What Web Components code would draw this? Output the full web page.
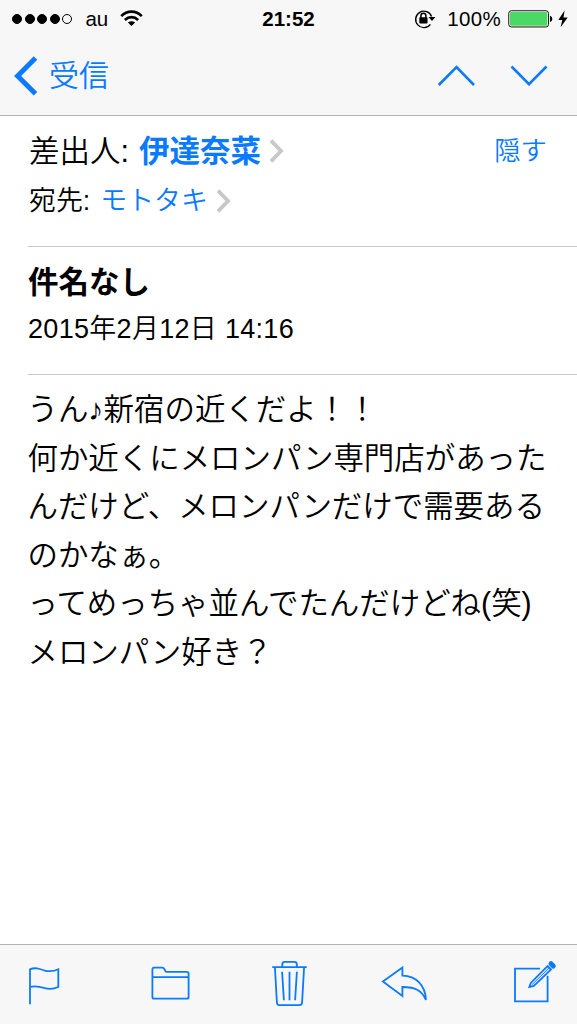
<!DOCTYPE html>
<html lang="ja">
<head>
<meta charset="utf-8">
<title>受信</title>
<style>
    body{
        margin:0;
        background-color:white;
        color:#000;
        font-family:"Liberation Sans","Noto Sans CJK JP",sans-serif;
        --blue:#0a7aff;
        --bar:#f7f7f7;
        --line:#c8c7cc;
    }
</style>
</head>
<body>
<mail-screen>
    <status-bar slot="top" carrier="au" time="21:52" battery="100%"></status-bar>
    <nav-bar slot="top">受信</nav-bar>
    <mail-address label="差出人:" strong>伊達奈菜<span slot="action">隠す</span></mail-address>
    <mail-address label="宛先:">モトタキ</mail-address>
    <mail-subject date="2015年2月12日 14:16">件名なし</mail-subject>
    <mail-body>うん♪新宿の近くだよ！！
何か近くにメロンパン専門店があった
んだけど、メロンパンだけで需要ある
のかなぁ。
ってめっちゃ並んでたんだけどね(笑)
メロンパン好き？</mail-body>
    <tool-bar slot="bottom"></tool-bar>
</mail-screen>
<script>
const icons = {
    wifi: [23, 17, `<g fill="none" stroke="#000" stroke-width="2.7"><path d="M1.2 6.1C7.2.2 15.8.2 21.8 6.1"/><path d="M4.9 9.9C8.8 6.2 14.2 6.2 18.1 9.9"/></g><path d="M11.5 16L7.9 12.6C10 10.9 13 10.9 15.1 12.6Z"/>`],
    lock: [22, 20, `<path d="M16.400 15.400A8.200 8.200 0 1 1 17.600 7.600" fill="none" stroke="#000" stroke-width="1.4"/><path d="M14.600 8.100H21.400L18 12.100Z"/><rect x="5.3" y="8.300" width="8.2" height="6.2" rx=".8"/><path d="M6.900 9V6.700A2.500 2.500 0 0 1 11.900 6.700V9" fill="none" stroke="#000" stroke-width="1.5"/>`],
    battery: [45, 18, `<rect x=".75" y=".75" width="39.8" height="16.2" rx="2.6" fill="#fff" stroke="#111" stroke-width="1"/><rect x="2" y="2" width="37.3" height="13.7" rx="1.3" fill="#4cd864"/><path d="M42 6C45 6.5 45 11.3 42 11.9Z"/>`],
    bolt: [10, 18, `<path d="M6.6 .5L.3 9.9H4.300L2.6 17.2L9.7 7.4H5.5Z"/>`],
    back: [24, 40, `<path d="M21.5 2L3.6 19.9L21.5 37.8" fill="none" stroke="currentColor" stroke-width="5"/>`],
    up: [38, 22, `<path d="M1.8 20L19.5 2.2L37 20" fill="none" stroke="currentColor" stroke-width="2.6"/>`],
    down: [38, 22, `<path d="M1.5 1.5L19 19.2L36.5 1.5" fill="none" stroke="currentColor" stroke-width="2.6"/>`],
    more: [15, 24, `<path d="M2 1.600L12 12L2 22.400" fill="none" stroke="#c7c7cc" stroke-width="3.8"/>`],
    flag: [31, 46, `<path d="M1 43.3V8.3C6 6.2 10 7.6 15 9.3C20 10.8 24 10.8 29.3 8.2V26C24 28.4 20 28.3 15 26.9C10 25.3 6 24.5 1 26"/>`],
    folder: [39, 46, `<path d="M1.4 36V8.4Q1.4 6.7 3 6.7H11.3Q12.7 6.7 13.3 8L14.3 9.8Q14.8 10.8 16 10.8H35.8Q37.6 10.8 37.6 12.5V36Q37.6 37.7 36 37.7H3Q1.4 37.7 1.4 36ZM1.4 16.2H37.6"/>`],
    trash: [35, 46, `<path d="M.3 6.1H34.7M10.3 6V3.2Q10.3.8 12.7.8H22.4Q24.8.8 24.8 3.2V6M2.9 6L4.9 41.5Q5 44.2 7.7 44.2H27.3Q30 44.2 30.1 41.5L32.1 6M10.1 10.7L11.9 39.3M17.5 10.7V39.3M24.9 10.7L23.1 39.3"/>`],
    reply: [46, 46, `<path d="M.9 20.4L20.4 6.4V14.7C34 15 43.5 24 43.9 39C40 29.5 33.5 26 20.4 26V34.9Z"/>`],
    compose: [42, 46, `<path d="M26 7.7H1V40.3H33.6V14.7M15.3 26L16.8 21.9L33.6 5.1L37 8.5L19.8 25Z"/><path d="M18 23.600L35 7" stroke-width="1"/><path d="M37 2.700L39.300 5" stroke-width="5" stroke-linecap="round"/>`]
};

class MailIcon extends HTMLElement {
    constructor() {
        super();
        this.attachShadow({ mode: "open" });
    }
    connectedCallback() {
        const [w, h, art] = icons[this.getAttribute("name")];
        this.shadowRoot.innerHTML = `
        <style>
        :host{
            display:block;
            flex:none;
            width:${w}px;
            height:${h}px;
        }
        svg{
            display:block;
            overflow:visible;
        }
        </style>
        <svg width="${w}" height="${h}" viewBox="0 0 ${w} ${h}">${art}</svg>
        `;
    }
}
customElements.define("mail-icon", MailIcon);

class StatusBar extends HTMLElement {
    constructor() {
        super();
        this.attachShadow({ mode: "open" });
        this.shadowRoot.innerHTML = `
        <style>
        :host{
            display:grid;
            grid-template-columns:1fr auto 1fr;
            align-items:center;
            height:37px;
            padding:0 9px 0 12px;
            font-size:20.5px;
            line-height:24px;
        }
        .side{
            display:flex;
            align-items:center;
        }
        .right{
            justify-content:flex-end;
        }
        .dots{
            display:flex;
            gap:2.6px;
            margin-right:13px;
        }
        .dots i{
            box-sizing:border-box;
            width:10px;
            height:10px;
            border:1px solid #000;
            border-radius:50%;
            background-color:#000;
        }
        .dots i:last-child{
            background-color:transparent;
        }
        #carrier{
            margin-right:12px;
        }
        #time{
            margin-right:3px;
            font-weight:bold;
        }
        #battery{
            margin:0 7px 0 11px;
            letter-spacing:0.3px;
        }
        .bolt{
            margin-left:5px;
        }
        </style>
        <div class="side">
            <div class="dots"><i></i><i></i><i></i><i></i><i></i></div>
            <span id="carrier"></span>
            <mail-icon name="wifi"></mail-icon>
        </div>
        <span id="time"></span>
        <div class="side right">
            <mail-icon name="lock"></mail-icon>
            <span id="battery"></span>
            <mail-icon name="battery"></mail-icon>
            <mail-icon name="bolt" class="bolt"></mail-icon>
        </div>
        `;
    }
    connectedCallback() {
        for (const key of ["carrier", "time", "battery"]) {
            this.shadowRoot.querySelector("#" + key).textContent = this.getAttribute(key);
        }
    }
}
customElements.define("status-bar", StatusBar);

class NavBar extends HTMLElement {
    constructor() {
        super();
        this.attachShadow({ mode: "open" });
        this.shadowRoot.innerHTML = `
        <style>
        :host{
            box-sizing:border-box;
            display:flex;
            align-items:center;
            height:79px;
            padding:0 29px 1px 14px;
            border-bottom:1px solid #b2b2b2;
            color:var(--blue);
            font-size:30px;
            font-weight:350;
            line-height:40px;
        }
        .title{
            flex:1;
            margin-left:11px;
        }
        .down{
            margin-left:35px;
        }
        </style>
        <mail-icon name="back"></mail-icon>
        <span class="title"><slot></slot></span>
        <mail-icon name="up"></mail-icon>
        <mail-icon name="down" class="down"></mail-icon>
        `;
    }
}
customElements.define("nav-bar", NavBar);

class MailAddress extends HTMLElement {
    constructor() {
        super();
        this.attachShadow({ mode: "open" });
        this.shadowRoot.innerHTML = `
        <style>
        :host{
            display:flex;
            align-items:center;
            height:46px;
            padding:0 30px 0 1px;
            font-size:26.9px;
            font-weight:350;
            line-height:46px;
        }
        :host([strong]){
            height:54px;
            padding-top:8px;
            font-size:30.5px;
        }
        .name{
            margin:0 8px 0 10px;
            color:var(--blue);
        }
        :host([strong]) .name{
            font-weight:bold;
        }
        .action{
            margin-left:auto;
            color:var(--blue);
            font-size:26.4px;
        }
        </style>
        <span id="label"></span>
        <span class="name"><slot></slot></span>
        <mail-icon name="more"></mail-icon>
        <span class="action"><slot name="action"></slot></span>
        `;
    }
    connectedCallback() {
        this.shadowRoot.querySelector("#label").textContent = this.getAttribute("label");
    }
}
customElements.define("mail-address", MailAddress);

class MailSubject extends HTMLElement {
    constructor() {
        super();
        this.attachShadow({ mode: "open" });
        this.shadowRoot.innerHTML = `
        <style>
        :host{
            box-sizing:border-box;
            display:block;
            height:129px;
            margin-top:22px;
            padding-top:12px;
            border-top:1px solid var(--line);
            border-bottom:1px solid var(--line);
        }
        .subject{
            font-size:30.5px;
            font-weight:bold;
            line-height:46px;
        }
        #date{
            font-size:27px;
            font-weight:350;
            letter-spacing:0.3px;
            line-height:48px;
        }
        </style>
        <div class="subject"><slot></slot></div>
        <div id="date"></div>
        `;
    }
    connectedCallback() {
        this.shadowRoot.querySelector("#date").textContent = this.getAttribute("date");
    }
}
customElements.define("mail-subject", MailSubject);

class MailBody extends HTMLElement {
    constructor() {
        super();
        this.attachShadow({ mode: "open" });
        this.shadowRoot.innerHTML = `
        <style>
        :host{
            display:block;
            margin-left:-0.5px;
            padding-top:10px;
            font-size:30.45px;
            font-weight:350;
            line-height:48.6px;
            white-space:pre;
        }
        </style>
        <slot></slot>
        `.trim();
        // white-space is pre, so the style and slot must not leave blank lines
        this.shadowRoot.childNodes.forEach(n => n.nodeType === 3 && n.remove());
    }
}
customElements.define("mail-body", MailBody);

class ToolBar extends HTMLElement {
    constructor() {
        super();
        this.attachShadow({ mode: "open" });
        this.shadowRoot.innerHTML = `
        <style>
        :host{
            box-sizing:border-box;
            display:grid;
            grid-template-columns:122px 121px 110px 132px 42px;
            height:80px;
            padding:16px 0 0 29px;
            border-top:1px solid #b2b2b2;
            background-color:var(--bar);
            color:var(--blue);
            fill:none;
            stroke:currentColor;
            stroke-width:1.8;
        }
        </style>
        <mail-icon name="flag"></mail-icon>
        <mail-icon name="folder"></mail-icon>
        <mail-icon name="trash"></mail-icon>
        <mail-icon name="reply"></mail-icon>
        <mail-icon name="compose"></mail-icon>
        `;
    }
}
customElements.define("tool-bar", ToolBar);

class MailScreen extends HTMLElement {
    constructor() {
        super();
        this.attachShadow({ mode: "open" });
        this.shadowRoot.innerHTML = `
        <style>
        :host{
            display:flex;
            flex-direction:column;
            width:577px;
            height:1024px;
            overflow:hidden;
        }
        header{
            background-color:var(--bar);
        }
        main{
            flex:1;
            padding-left:28px;
        }
        </style>
        <header><slot name="top"></slot></header>
        <main><slot></slot></main>
        <footer><slot name="bottom"></slot></footer>
        `;
    }
}
customElements.define("mail-screen", MailScreen);
</script>
</body>
</html>
